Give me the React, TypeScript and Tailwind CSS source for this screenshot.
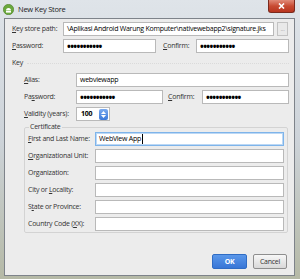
const U = ({ children }: { children: string }) => <span className="underline underline-offset-1">{children}</span>;

const DOTS = "•••••••••••";

function Field({ w, children, focus }: { w: string; children?: React.ReactNode; focus?: boolean }) {
  return (
    <div
      className={`${w} h-[14px] bg-white border flex items-center px-[3px] overflow-hidden whitespace-nowrap ${
        focus ? "border-[#7eb4ea] shadow-[inset_0_0_0_1px_#bcd8f5]" : "border-[#b9b9b9]"
      }`}
    >
      {children}
    </div>
  );
}

function Dots() {
  return <span className="text-[10px] leading-none font-bold tracking-[-0.6px] text-black">{DOTS}</span>;
}

function CertRow({ label, value, focus }: { label: React.ReactNode; value?: string; focus?: boolean }) {
  return (
    <div className="flex items-center">
      <div className="w-[67px] text-[#333] whitespace-nowrap">{label}</div>
      <Field w="w-[189px]" focus={focus}>
        {value && <span className="text-black">{value}</span>}
        {focus && <span className="w-px h-[10px] bg-black ml-px" />}
      </Field>
    </div>
  );
}

export default function App() {
  return (
    <div className="w-[300px] h-[279px] overflow-hidden flex flex-col bg-gradient-to-b from-[#dfe4e9] via-[#cdd3d9] to-[#b5b9a6] font-['Open_Sans',sans-serif] text-[7px] tracking-[-0.25px] leading-[10px] text-[#1e1e1e]">
      {/* Title bar */}
      <div className="relative h-[18px] flex items-center pl-[3px] shrink-0">
        <svg width="11" height="11" viewBox="0 0 11 11">
          <circle cx="5.5" cy="5.5" r="5.2" fill="#6aa83d" stroke="#4d7f2a" strokeWidth="0.6" />
          <path d="M3 6.5 a2.5 2.5 0 0 1 5 0 z" fill="#fff" />
          <rect x="3" y="7" width="5" height="1.6" fill="#fff" />
        </svg>
        <span className="ml-[4px] text-[7.5px] text-[#1b1b1b]">New Key Store</span>
        <div className="absolute right-[5px] top-0 w-[27px] h-[13px] rounded-b-[3px] border border-[#7a2a1e] border-t-0 bg-gradient-to-b from-[#e08a78] via-[#c84b33] to-[#b8351f] flex items-center justify-center">
          <svg width="7" height="6" viewBox="0 0 7 6">
            <path d="M1 0.5 L6 5.5 M6 0.5 L1 5.5" stroke="#fff" strokeWidth="1.6" />
          </svg>
        </div>
      </div>

      {/* Client */}
      <div className="ml-[4px] mr-[5px] h-[258px] border border-[#7e838a] bg-[#ececec] flex flex-col">
        <div className="flex items-center mt-[3px] pl-[7px]">
          <div className="w-[51px] text-[#333]">
            <U>K</U>ey store path:
          </div>
          <Field w="w-[211px]">
            <span className="text-black">\Aplikasi Android Warung Komputer\nativewebapp2\signature.jks</span>
          </Field>
          <div className="ml-[3px] w-[11px] h-[14px] border border-[#c2c2c2] bg-[#e9e9e9] text-[#999] text-[6px] leading-[10px] flex items-center justify-center">
            ...
          </div>
        </div>

        <div className="flex items-center mt-[3px] pl-[7px]">
          <div className="w-[51px] text-[#333]">
            <U>P</U>assword:
          </div>
          <Field w="w-[93px]">
            <Dots />
          </Field>
          <div className="ml-[7px] w-[33px] text-[#333]">
            <U>C</U>onfirm:
          </div>
          <Field w="w-[93px]">
            <Dots />
          </Field>
        </div>

        <div className="mt-[5px] pl-[7px] flex items-center text-[#333]">
          <span>Key</span>
          <div className="ml-[4px] mr-[5px] flex-1 border-t border-dotted border-[#dadada]" />
        </div>

        <div className="flex items-center mt-[5px] pl-[19px]">
          <div className="w-[52px] text-[#333]">
            <U>A</U>lias:
          </div>
          <Field w="w-[213px]">
            <span className="text-black">webviewapp</span>
          </Field>
        </div>

        <div className="flex items-center mt-[3px] pl-[19px]">
          <div className="w-[52px] text-[#333]">
            Pa<U>s</U>sword:
          </div>
          <Field w="w-[87px]">
            <Dots />
          </Field>
          <div className="ml-[5px] w-[34px] text-[#333]">
            <U>C</U>onfirm:
          </div>
          <Field w="w-[87px]">
            <Dots />
          </Field>
        </div>

        <div className="flex items-center mt-[3px] pl-[19px]">
          <div className="w-[52px] text-[#333]">
            <U>V</U>alidity (years):
          </div>
          <div className="w-[34px] h-[14px] bg-white border border-[#b9b9b9] flex items-center pl-[4px]">
            <span className="font-bold text-black">100</span>
            <div className="ml-auto mr-px w-[9px] h-[11px] rounded-[2px] bg-gradient-to-b from-[#7aaaf0] to-[#3b78d8] flex flex-col items-center justify-center gap-[1px]">
              <svg width="5" height="3" viewBox="0 0 5 3">
                <path d="M0 3 L2.5 0 L5 3 z" fill="#fff" />
              </svg>
              <svg width="5" height="3" viewBox="0 0 5 3">
                <path d="M0 0 L2.5 3 L5 0 z" fill="#fff" />
              </svg>
            </div>
          </div>
        </div>

        <fieldset className="mt-[1px] ml-[19px] w-[264px] border border-[#d3d3d3] rounded-[2px] px-[3px] pb-[1px] flex flex-col gap-[3px]">
          <legend className="px-[1px] ml-[1px] text-[#333]">Certificate</legend>
          <CertRow
            label={
              <>
                <U>F</U>irst and Last Name:
              </>
            }
            value="WebView App"
            focus
          />
          <CertRow
            label={
              <>
                <U>O</U>rganizational Unit:
              </>
            }
          />
          <CertRow
            label={
              <>
                Or<U>g</U>anization:
              </>
            }
          />
          <CertRow
            label={
              <>
                City or <U>L</U>ocality:
              </>
            }
          />
          <CertRow
            label={
              <>
                S<U>t</U>ate or Province:
              </>
            }
          />
          <CertRow
            label={
              <>
                Country Code (<U>X</U>X):
              </>
            }
          />
        </fieldset>

        <div className="mt-auto mb-[6px] mr-[7px] flex justify-end gap-[6px]">
          <div className="w-[35px] h-[15px] rounded-[2px] border border-[#2f6cc4] bg-gradient-to-b from-[#5a97ea] to-[#3876d6] flex items-center justify-center text-white font-bold">
            OK
          </div>
          <div className="w-[34px] h-[15px] rounded-[2px] border border-[#8e8e8e] bg-gradient-to-b from-[#f7f7f7] to-[#d9d9d9] flex items-center justify-center text-[#333]">
            Cancel
          </div>
        </div>
      </div>
    </div>
  );
}
